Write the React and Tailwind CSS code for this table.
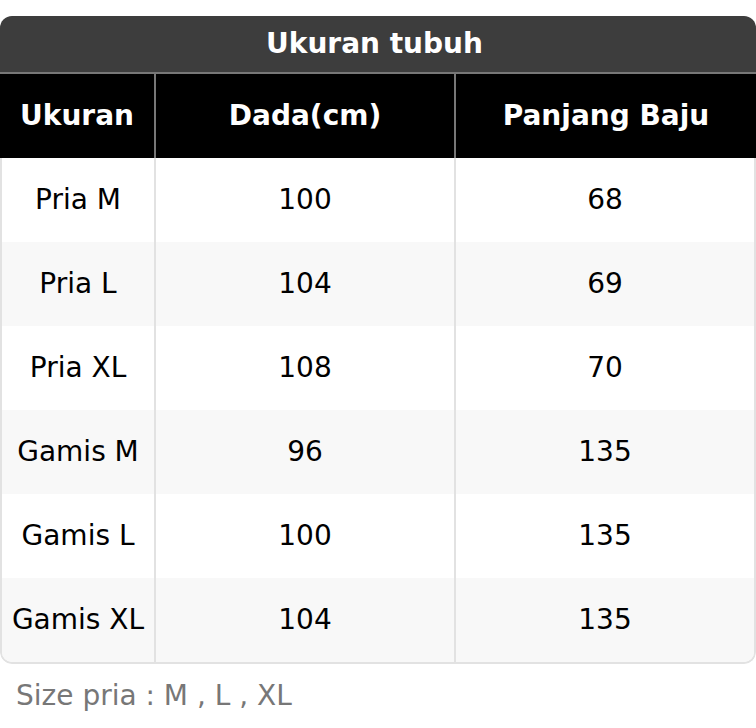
import React from "react";

const rows = [
  { size: "Pria M", chest: "100", length: "68" },
  { size: "Pria L", chest: "104", length: "69" },
  { size: "Pria XL", chest: "108", length: "70" },
  { size: "Gamis M", chest: "96", length: "135" },
  { size: "Gamis L", chest: "100", length: "135" },
  { size: "Gamis XL", chest: "104", length: "135" },
];

export default function App() {
  return (
    <div
      className="w-[756px] bg-white pt-4 text-[28px]"
      style={{ fontFamily: '"DejaVu Sans", Verdana, sans-serif' }}
    >
      <div className="rounded-[12px] overflow-hidden">
        {/* judul */}
        <div className="h-[58px] pr-[7px] bg-[#3d3d3d] text-white font-bold flex items-center justify-center border-b-2 border-[#777]">
          Ukuran tubuh
        </div>
        {/* header kolom */}
        <div className="flex h-[84px] bg-black text-white font-bold">
          <div className="w-[154px] flex items-center justify-center">Ukuran</div>
          <div className="w-[300px] border-l-2 border-[#777] flex items-center justify-center">Dada(cm)</div>
          <div className="flex-1 border-l-2 border-[#777] flex items-center justify-center">Panjang Baju</div>
        </div>
        <div className="border-x-2 border-b-2 border-[#e2e2e2] rounded-b-[12px] overflow-hidden text-black">
          {rows.map((r, i) => (
            <div
              key={i}
              className={"flex h-[84px] " + (i % 2 === 1 ? "bg-[#f8f8f8]" : "bg-white")}
            >
              <div className="w-[152px] flex items-center justify-center">{r.size}</div>
              <div className="w-[300px] border-l-2 border-[#e2e2e2] flex items-center justify-center">{r.chest}</div>
              <div className="flex-1 border-l-2 border-[#e2e2e2] flex items-center justify-center">{r.length}</div>
            </div>
          ))}
        </div>
      </div>
      <p className="pl-4 pt-[11px] text-[#777]">Size pria : M , L , XL</p>
    </div>
  );
}
